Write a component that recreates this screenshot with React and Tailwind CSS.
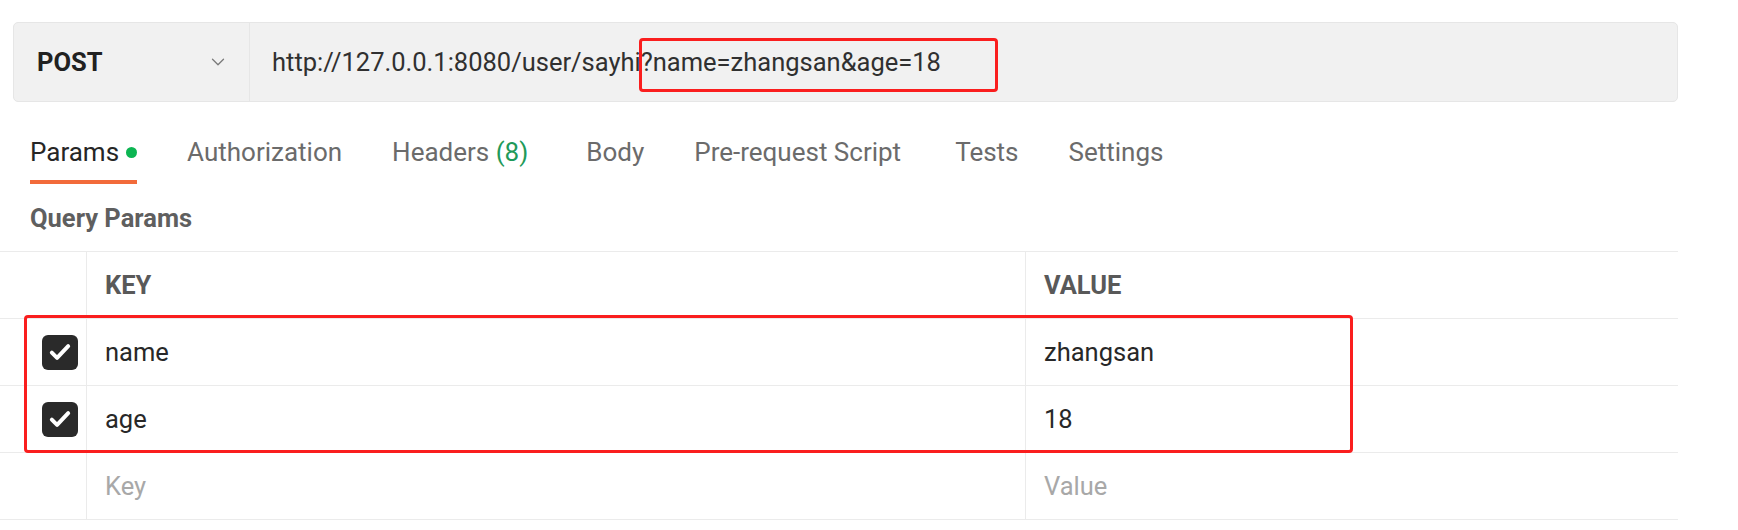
import React from "react";
import { ChevronDown } from "lucide-react";

function Check() {
  return (
    <div className="w-[36px] h-[35px] rounded-[6px] bg-[#2a2a2a] flex items-center justify-center">
      <svg width="28" height="28" viewBox="0 0 24 24" fill="none" stroke="#fff" strokeWidth="3.4" strokeLinecap="round" strokeLinejoin="round">
        <path d="M5 12.5l4.5 4.5L19 7" />
      </svg>
    </div>
  );
}

function Row({ k, v, checked, placeholder }) {
  return (
    <div className="grid grid-cols-[86px_939px_1fr] h-[67px] border-b border-[#ebebeb]">
      <div className="flex items-center pl-[42px]">{checked ? <Check /> : null}</div>
      <div className={`flex items-center pl-[18px] border-l border-[#ebebeb] ${placeholder ? "text-[#a8a8a8]" : "text-[#282828]"}`}>{k}</div>
      <div className={`flex items-center pl-[18px] border-l border-[#ebebeb] ${placeholder ? "text-[#a8a8a8]" : "text-[#282828]"}`}>{v}</div>
    </div>
  );
}

export default function App() {
  return (
    <div className="relative w-[1738px] h-[530px] bg-white overflow-hidden font-['Roboto',sans-serif] text-[25.5px] leading-[30px]">
      <div className="w-[1678px]">
        <div className="pl-[13px] pt-[22px]">
          <div className="flex h-[80px] rounded-[5px] border border-[#e6e6e6] bg-[#f1f1f1]">
            <div className="w-[236px] flex items-center justify-between pl-[23px] pr-[20px] border-r border-[#e6e6e6]">
              <span className="font-bold text-[#212121]">POST</span>
              <ChevronDown size={22} strokeWidth={1.4} color="#7a7a7a" />
            </div>
            <div className="flex-1 flex items-center pl-[22px] text-[#303030]">
              http://127.0.0.1:8080/user/sayhi?name=zhangsan&amp;age=18
            </div>
          </div>
        </div>

        <div className="pl-[30px] pt-[35px] flex items-start gap-[50px] text-[26px] text-[#6b6b6b]">
          <div className="flex flex-col">
            <div className="flex items-center text-[#262626]">
              Params
              <span className="ml-[7px] w-[11px] h-[11px] rounded-full bg-[#0cb552]" />
            </div>
            <div className="mt-[13px] h-[4px] bg-[#f26b3a]" />
          </div>
          <div>Authorization</div>
          <div>
            Headers <span className="text-[#1f9a5a]">(8)</span>
          </div>
          <div className="ml-[8px]">Body</div>
          <div>Pre-request Script</div>
          <div className="ml-[4px]">Tests</div>
          <div>Settings</div>
        </div>

        <div className="pl-[30px] mt-[19px] font-bold text-[#5f5f5f]">Query Params</div>

        <div className="mt-[18px] border-t border-[#ebebeb]">
          <div className="grid grid-cols-[86px_939px_1fr] h-[67px] border-b border-[#ebebeb] font-bold text-[#595959]">
            <div />
            <div className="flex items-center pl-[18px] border-l border-[#ebebeb]">KEY</div>
            <div className="flex items-center pl-[18px] border-l border-[#ebebeb]">VALUE</div>
          </div>
          <Row k="name" v="zhangsan" checked />
          <Row k="age" v="18" checked />
          <Row k="Key" v="Value" placeholder />
        </div>
      </div>

      <div className="absolute left-[639px] top-[38px] w-[359px] h-[54px] border-[3px] border-[#fa1e1e] rounded-[4px]" />
      <div className="absolute left-[24px] top-[315px] w-[1329px] h-[138px] border-[3px] border-[#fa1e1e] rounded-[4px]" />
    </div>
  );
}
